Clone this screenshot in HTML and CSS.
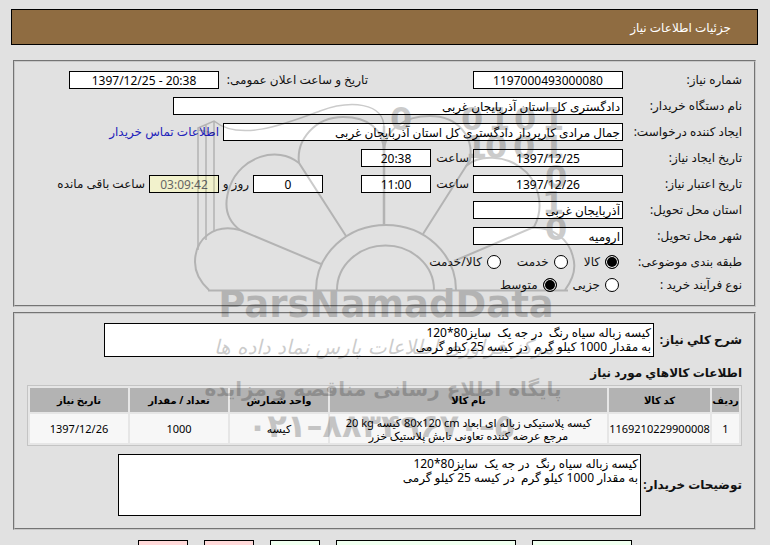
FILE: index.html
```html
<!DOCTYPE html>
<html lang="fa" dir="rtl">
<head>
<meta charset="utf-8">
<title>جزئیات اطلاعات نیاز</title>
<link rel="stylesheet" href="styles.css">
</head>
<body>
<header class="banner">جزئیات اطلاعات نیاز</header>
<main>
<form>
<section class="panel request">
  <div class="row">
    <label class="caption" for="num">شماره نیاز:</label>
    <input class="field medium" id="num" value="1197000493000080" readonly>
    <label class="announce" for="pub">تاریخ و ساعت اعلان عمومی:</label>
    <input class="field medium" id="pub" dir="ltr" value="1397/12/25 - 20:38" readonly>
  </div>
  <div class="row">
    <label class="caption" for="org">نام دستگاه خریدار:</label>
    <input class="field widest name" id="org" value="دادگستری کل استان آذربایجان غربی" readonly>
  </div>
  <div class="row">
    <label class="caption" for="creator">ایجاد کننده درخواست:</label>
    <input class="field wide name" id="creator" value="جمال مرادی کارپرداز دادگستری کل استان آذربایجان غربی" readonly>
    <a class="contact" href="#">اطلاعات تماس خریدار</a>
  </div>
  <div class="row">
    <label class="caption" for="cdate">تاریخ ایجاد نیاز:</label>
    <input class="field medium" id="cdate" dir="ltr" value="1397/12/25" readonly>
    <label class="hour" for="ctime">ساعت</label>
    <input class="field small" id="ctime" value="20:38" readonly>
  </div>
  <div class="row">
    <label class="caption" for="vdate">تاریخ اعتبار نیاز:</label>
    <input class="field medium" id="vdate" dir="ltr" value="1397/12/26" readonly>
    <label class="hour" for="vtime">ساعت</label>
    <input class="field small" id="vtime" value="11:00" readonly>
    <input class="field small days" id="days" value="0" readonly>
    <label class="and" for="days">روز و</label>
    <input class="field small remaining" id="left" value="03:09:42" readonly>
    <label class="after" for="left">ساعت باقی مانده</label>
  </div>
  <div class="row">
    <label class="caption" for="prov">استان محل تحویل:</label>
    <input class="field medium name" id="prov" value="آذربایجان غربی" readonly>
  </div>
  <div class="row">
    <label class="caption" for="city">شهر محل تحویل:</label>
    <input class="field medium name" id="city" value="ارومیه" readonly>
  </div>
  <div class="row choices">
    <span class="caption">طبقه بندی موضوعی:</span>
    <label class="choice"><input type="radio" name="subject" checked>کالا</label>
    <label class="choice"><input type="radio" name="subject">خدمت</label>
    <label class="choice"><input type="radio" name="subject">کالا/خدمت</label>
  </div>
  <div class="row choices">
    <span class="caption">نوع فرآیند خرید :</span>
    <label class="choice"><input type="radio" name="process">جزیی</label>
    <label class="choice"><input type="radio" name="process" checked>متوسط</label>
  </div>
</section>

<section class="panel goods">
  <div class="block">
    <label class="title summary-title" for="desc">شرح کلي نیاز:</label>
    <textarea class="summary" id="desc" readonly>کیسه زباله سیاه رنگ  در جه یک  سایز80*120
به مقدار 1000 کیلو گرم  در کیسه 25 کیلو گرمی</textarea>
  </div>
  <h2 class="title">اطلاعات کالاهاي مورد نیاز</h2>
  <table>
    <colgroup><col class="c-row"><col class="c-code"><col><col class="c-mid"><col class="c-mid"><col class="c-mid"></colgroup>
    <thead><tr><th>ردیف</th><th>کد کالا</th><th>نام کالا</th><th>واحد شمارش</th><th>تعداد / مقدار</th><th>تاریخ نیاز</th></tr></thead>
    <tbody><tr><td>1</td><td>1169210229900008</td><td>کیسه پلاستیکی زباله ای ابعاد <bdi>80x120 cm</bdi> کیسه <bdi>20 kg</bdi><br>مرجع عرضه کننده تعاونی تابش پلاستیک خزر</td><td>کیسه</td><td>1000</td><td dir="ltr">1397/12/26</td></tr></tbody>
  </table>
  <div class="block">
    <label class="title notes-title" for="notes">توضیحات خریدار:</label>
    <textarea class="notes" id="notes" readonly>کیسه زباله سیاه رنگ  در جه یک  سایز80*120
به مقدار 1000 کیلو گرم  در کیسه 25 کیلو گرمی</textarea>
  </div>
</section>
<div class="actions">
  <button type="button" class="action green print" aria-label="چاپ"></button>
  <button type="button" class="action green files" aria-label="مدارک پیوست"></button>
  <button type="button" class="action green" aria-label="تایید"></button>
  <button type="button" class="action red" aria-label="بازگشت"></button>
  <button type="button" class="action red" aria-label="خروج"></button>
</div>
</form>
</main>
<svg class="watermark" viewBox="180 90 410 360" width="410" height="360" direction="ltr" aria-hidden="true">
  <g fill="none" stroke="#000" stroke-width="2">
    <path d="M198 250V128L214 121C240 142 285 124 320 111C350 100 384 102 384 128V225M206 240V125M214 231V121M198 130C204 130 209 133 214 133" stroke-width="1.5"/>
    <path d="M384 126V225" stroke-width="2.5"/>
    <path d="M208 290.500H568"/>
    <path d="M316 290A70 65 0 0 1 456 290M337 290A48 44 0 0 1 434 290"/>
    <path d="M209 290C198 280 195 270 195 262C195 239 214 223 240 230L321 264"/>
    <path d="M240 230C221 216 226 197 230 186C241 157 277 145 299 163L346 236"/>
    <path d="M299 163C296 140 315 117 343 117C368 117 384 129 384 153C384 129 405 116 430 116C458 116 474 137 470 160L423 234"/>
    <path d="M466 166C480 154 505 156 520 167C539 180 545 207 534 227L454 261"/>
    <path d="M530 228C552 226 569 239 573 257C577 270 571 282 565 290"/>
  </g>
  <g class="bits">
    <text x="390" y="130">0</text><text x="461 488 514 542" y="130">0101</text>
    <text x="465 485 513 542" y="158">1001</text>
    <text x="545" y="188">0</text><text x="542" y="214">1</text><text x="545" y="240">0</text>
  </g>
  <text class="brand" x="386" y="317">ParsNamadData</text>
  <text class="script" x="384" y="354" direction="rtl">مرکز فرآوری اطلاعات پارس نماد داده ها</text>
  <text class="tagline" x="383" y="396" direction="rtl">پایگاه اطلاع رسانی مناقصه و مزایده</text>
  <text class="phone" x="381" y="437">&#x202D;۰۲۱–۸۸۳۴۹۶۷۰–۵</text>
</svg>
</body>
</html>
```
FILE: styles.css
```css
* { box-sizing: border-box; }
body {
  margin: 0;
  position: relative;
  height: 100vh;
  overflow: hidden;
  padding: 9px 12px 0 11px;
  background: #e1e1e1;
  color: #111;
  font: 12px/16px "Noto Sans", "DejaVu Sans", sans-serif;
}
.banner {
  height: 36px;
  padding: 0 26px;
  border: 1px solid #000;
  background: #8f6c41;
  color: #fff;
  line-height: 36px;
}
.panel {
  margin: 0 2px;
  border: 2px groove #c8c8c8;
  padding: 0 12px;
}
.request { margin-top: 15px; height: 247px; padding-top: 9px; }
.row { display: flex; align-items: center; height: 18px; margin-bottom: 8px; white-space: nowrap; }
.caption { width: 119px; flex: none; }
.field {
  flex: none;
  height: 18px;
  margin: 0;
  padding: 0 2px;
  border: 1px solid #000;
  border-radius: 0;
  background: #fff;
  color: #000;
  font: inherit;
  text-align: center;
}
.name { text-align: right; }
.small { width: 70px; }
.medium { width: 150px; }
.wide { width: 400px; }
.widest { width: 450px; }
.announce { width: 254px; padding-right: 105px; }
.contact { margin-right: 4px; color: #22b; text-decoration: none; }
.hour { width: 42px; padding-right: 4px; }
.days { margin-right: 38px; }
.and { width: 34px; padding-right: 4px; }
.remaining { background: #f2f2cc; color: #666; }
.after { padding-right: 4px; }
.choices { margin-bottom: 5px; }
.choice { display: flex; align-items: center; gap: 5px; margin: 0 4px 0 12px; }
.choice input {
  appearance: none;
  width: 14px;
  height: 14px;
  margin: 0;
  border: 1px solid #000;
  border-radius: 50%;
  background: #fff;
}
.choice input:checked { background: #000; box-shadow: inset 0 0 0 1px #fff; }
.goods { margin-top: 5px; height: 218px; padding-top: 9px; }
.block { display: flex; align-items: center; }
.title { margin: 0; flex: none; font-size: 12px; font-weight: bold; line-height: 16px; white-space: nowrap; }
.summary-title { width: 88px; }
.notes-title { width: 101px; }
h2.title { margin: 8px 0 4px; }
textarea {
  display: block;
  padding: 2px;
  margin: 0;
  border: 1px solid #000;
  background: #fff;
  color: #000;
  font: inherit;
  line-height: 14px;
  resize: none;
  overflow: hidden;
}
.summary { flex: 0 1 550px; height: 34px; }
.notes { flex: 0 1 523px; height: 62px; }
table {
  width: 100%;
  height: 61px;
  margin-bottom: 8px;
  table-layout: fixed;
  border: 1px solid #c4c4c4;
  border-spacing: 2px;
  background: #e6e6e6;
  font-size: 11px;
  line-height: 13px;
}
.c-row { width: 27px; }
.c-code { width: 101px; }
.c-mid { width: 98px; }
th, td { padding: 0; text-align: center; color: #000; white-space: nowrap; }
th { height: 24px; background: #b3b3b3; font-size: 10px; }
td { background: #f7f7f7; }
.actions { display: flex; gap: 16px; margin-top: 10px; padding-right: 126px; }
.action { width: 50px; height: 24px; flex: none; padding: 0; border: 1px solid #000; }
.green { background: #efffef; }
.red { background: #ffd9d9; }
.print { width: 100px; }
.files { width: 180px; }
.watermark {
  position: absolute;
  top: 90px;
  left: 180px;
  opacity: 0.2;
  pointer-events: none;
}
.watermark text { font-family: "DejaVu Sans", sans-serif; }
.bits text { font-size: 32px; font-weight: bold; }
.brand, .script, .tagline, .phone { text-anchor: middle; }
.watermark .brand { font-size: 37px; font-weight: bold; }
.watermark .script { font-size: 20px; font-style: italic; }
.watermark .tagline { font-size: 20px; font-weight: bold; }
.watermark .phone { font-size: 32px; font-weight: bold; }
```
